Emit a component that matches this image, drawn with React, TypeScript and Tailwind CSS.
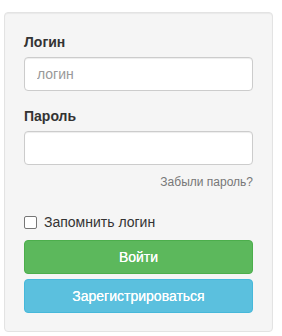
export default function App() {
  return (
    <div className="w-[282px] h-[336px] bg-white font-['Liberation_Sans',Arial,sans-serif] text-[14px] leading-[20px] text-[#333]">
      <div className="pt-3 pl-1 w-[273px]">
        <div className="bg-[#f5f5f5] border border-[#e3e3e3] rounded-[4px] p-[19px] pb-[18px] shadow-[inset_0_1px_1px_rgba(0,0,0,0.05)]">
          <div className="mb-[15px]">
            <label className="block font-bold mb-[5px]">Логин</label>
            <input
              className="block w-full h-[34px] px-3 bg-white border border-[#ccc] rounded-[4px] shadow-[inset_0_1px_1px_rgba(0,0,0,0.075)] outline-none placeholder:text-[#999]"
              placeholder="логин"
            />
          </div>
          <div className="mb-[15px]">
            <label className="block font-bold mb-[5px]">Пароль</label>
            <input
              type="password"
              className="block w-full h-[34px] px-3 bg-white border border-[#ccc] rounded-[4px] shadow-[inset_0_1px_1px_rgba(0,0,0,0.075)] outline-none"
            />
            <div className="text-right text-[12px] text-[#777] mt-[7px]">Забыли пароль?</div>
          </div>
          <label className="flex items-center gap-[7px] mt-[20px] mb-[8px]">
            <span className="w-[13px] h-[13px] border border-[#767676] rounded-[2px] bg-white" />
            <span>Запомнить логин</span>
          </label>
          <div className="flex flex-col gap-[5px]">
            <button className="h-[34px] w-full rounded-[4px] bg-[#5cb85c] border border-[#4cae4c] text-white [text-shadow:0_0_0.4px_#fff]">
              Войти
            </button>
            <button className="h-[34px] w-full rounded-[4px] bg-[#5bc0de] border border-[#46b8da] text-white [text-shadow:0_0_0.4px_#fff]">
              Зарегистрироваться
            </button>
          </div>
        </div>
      </div>
    </div>
  );
}
